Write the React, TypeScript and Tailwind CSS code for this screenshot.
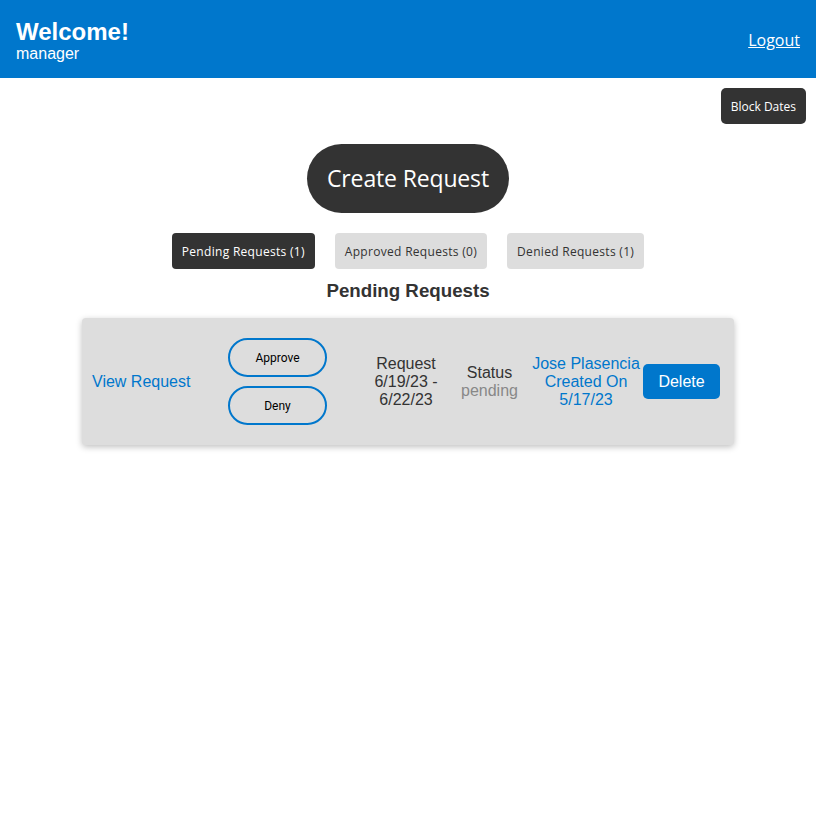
const segoe = "font-['Open_Sans',sans-serif]";

function Header() {
  return (
    <header className="flex h-[78px] items-center justify-between bg-[#0077cc] px-4 text-white">
      <div className="pt-[2px] font-['Liberation_Sans',Arial,sans-serif]">
        <h1 className="text-[24px] font-bold leading-[27px]">Welcome!</h1>
        <p className="text-[16px] leading-[18px]">manager</p>
      </div>
      <a href="#" className={`${segoe} pt-[2px] text-[16px] underline`}>
        Logout
      </a>
    </header>
  );
}

const tabs = [
  { label: 'Pending Requests (1)', active: true },
  { label: 'Approved Requests (0)', active: false },
  { label: 'Denied Requests (1)', active: false },
];

function RequestCard() {
  return (
    <div className="mx-auto flex h-[127px] w-[652px] items-center rounded-[4px] bg-[#dddddd] pl-[10px] text-[16px] leading-[18px] shadow-[0_2px_6px_rgba(0,0,0,0.25)] font-['Liberation_Sans',Arial,sans-serif]">
      <a href="#" className="w-[99px] text-[#0077cc]">
        View Request
      </a>
      <div className="ml-[37px] flex flex-col gap-[9px] font-['Roboto',sans-serif] text-[12px] text-black">
        <button className="h-[39px] w-[99px] rounded-full border-2 border-[#0077cc]">Approve</button>
        <button className="h-[39px] w-[99px] rounded-full border-2 border-[#0077cc]">Deny</button>
      </div>
      <div className="ml-[33px] w-[92px] text-center text-[#333333]">
        <div>Request</div>
        <div>6/19/23 -</div>
        <div>6/22/23</div>
      </div>
      <div className="ml-[9px] w-[57px] text-center">
        <div className="text-[#333333]">Status</div>
        <div className="text-[#888888]">pending</div>
      </div>
      <div className="ml-[14px] w-[108px] text-center text-[#0077cc]">
        <div>Jose Plasencia</div>
        <div>Created On</div>
        <div>5/17/23</div>
      </div>
      <button className="ml-[3px] h-[35px] w-[77px] rounded-[5px] bg-[#0077cc] text-white">Delete</button>
    </div>
  );
}

export default function App() {
  return (
    <div className="min-h-screen bg-white">
      <Header />
      <div className="flex justify-end pr-[10px] pt-[10px]">
        <button className={`${segoe} h-[36px] rounded-[5px] bg-[#333333] px-[10px] pt-[2px] text-[12px] text-white`}>
          Block Dates
        </button>
      </div>
      <div className="mt-[20px] flex justify-center">
        <button className={`${segoe} h-[69px] w-[202px] rounded-full bg-[#333333] text-[23px] tracking-[-0.15px] text-white`}>
          Create Request
        </button>
      </div>
      <div className="mt-[20px] flex justify-center gap-[20px]">
        {tabs.map((t) => (
          <button
            key={t.label}
            className={`${segoe} h-[36px] rounded-[4px] px-[10px] pt-[2px] text-[12px] tracking-[0.3px] ${
              t.active ? 'bg-[#333333] text-white' : 'bg-[#dddddd] text-[#333333]'
            }`}
          >
            {t.label}
          </button>
        ))}
      </div>
      <h3 className="mt-[11px] text-center text-[18.72px] font-bold leading-[22px] text-[#333333] font-['Liberation_Sans',Arial,sans-serif]">
        Pending Requests
      </h3>
      <div className="mt-[16px]">
        <RequestCard />
      </div>
    </div>
  );
}
